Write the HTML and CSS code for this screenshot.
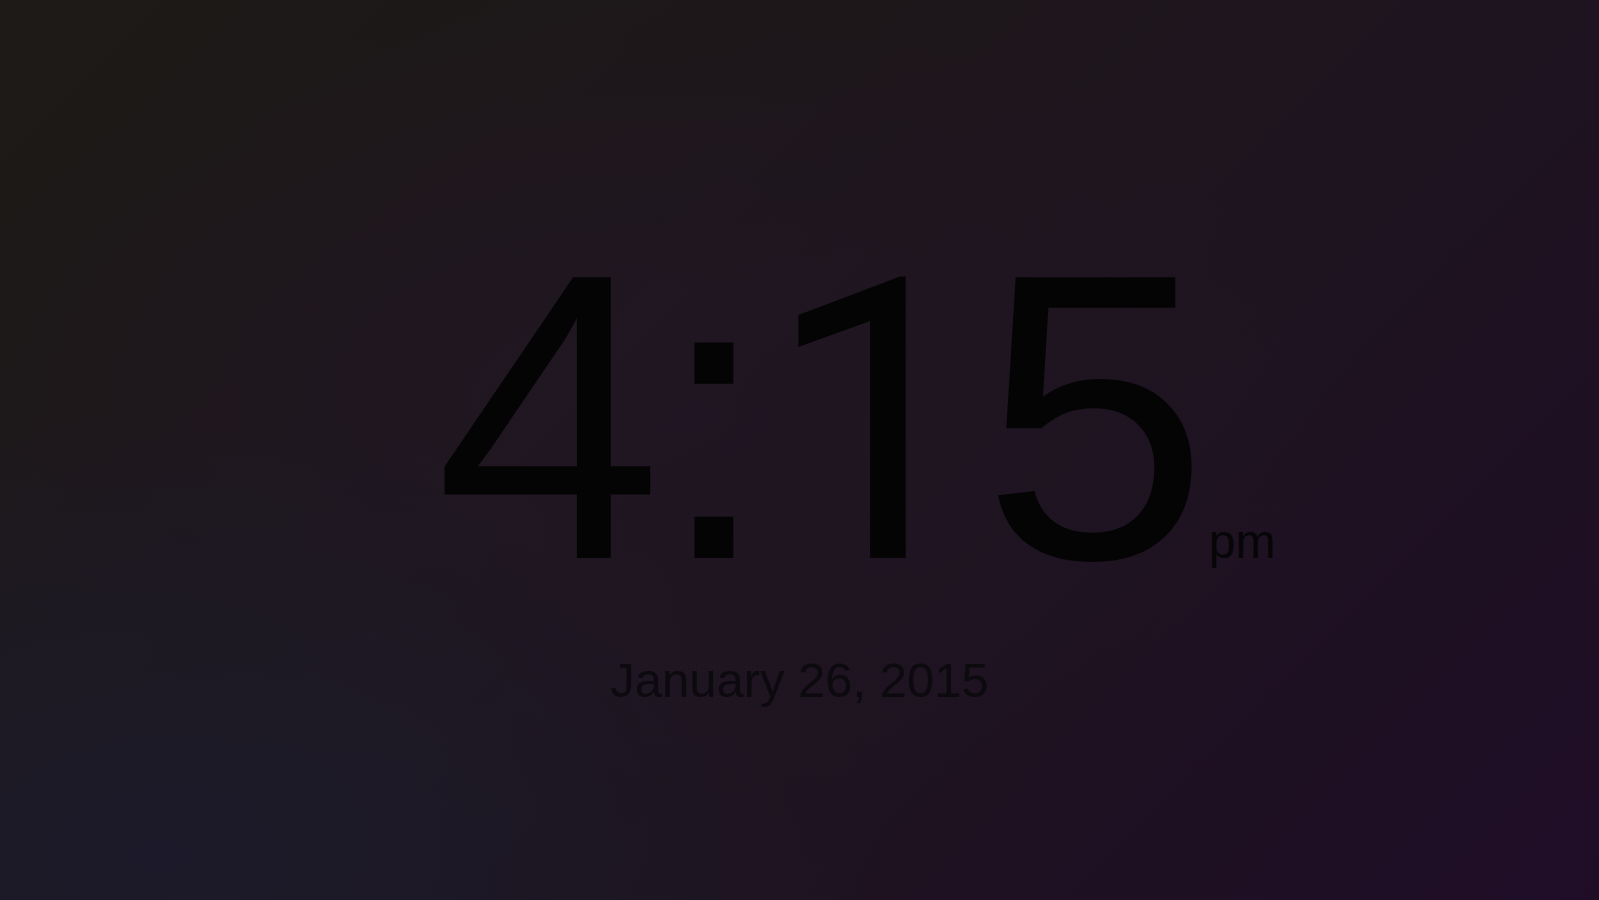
FILE: index.html
```html
<!DOCTYPE html>
<html lang="en">
<head>
<meta charset="utf-8">
<title>Clock</title>
<link rel="stylesheet" href="styles.css">
</head>
<body>
<main class="screen">
  <div class="clock">
    <div class="time">4:<span class="one">1</span>5<span class="ampm">pm</span></div>
  </div>
  <div class="date">January 26, 2015</div>
</main>
</body>
</html>
```
FILE: styles.css
```css
html, body {
  margin: 0;
  padding: 0;
  height: 100%;
}
body {
  background:
    radial-gradient(ellipse 45% 50% at 10% 95%, rgba(28, 27, 44, 0.9), rgba(28, 27, 44, 0) 100%),
    radial-gradient(ellipse 45% 45% at 40% 45%, rgba(34, 22, 40, 0.6), rgba(34, 22, 40, 0) 100%),
    linear-gradient(135deg, #1d1a17 0%, #1d171a 35%, #1e1320 65%, #1f0d27 100%);
  font-family: "Liberation Sans", Arial, sans-serif;
  overflow: hidden;
}
.screen {
  height: 100vh;
  box-sizing: border-box;
  padding-top: 213px;
  display: flex;
  flex-direction: column;
  align-items: center;
}
.clock {
  display: flex;
  justify-content: center;
  padding-left: 40px;
}
.time {
  position: relative;
  font-size: 408px;
  line-height: 1;
  letter-spacing: -5px;
  color: #050405;
  white-space: nowrap;
}
.one {
  font-family: Roboto, "Liberation Sans", sans-serif;
  font-size: 0.965em;
  line-height: 1;
}
.ampm {
  position: absolute;
  left: 100%;
  bottom: 55px;
  margin-left: 5px;
  font-size: 48px;
  line-height: 1;
  letter-spacing: 0;
  color: #060507;
}
.date {
  margin-top: 35px;
  font-size: 49px;
  line-height: 1;
  color: #0c0a0e;
}
```
